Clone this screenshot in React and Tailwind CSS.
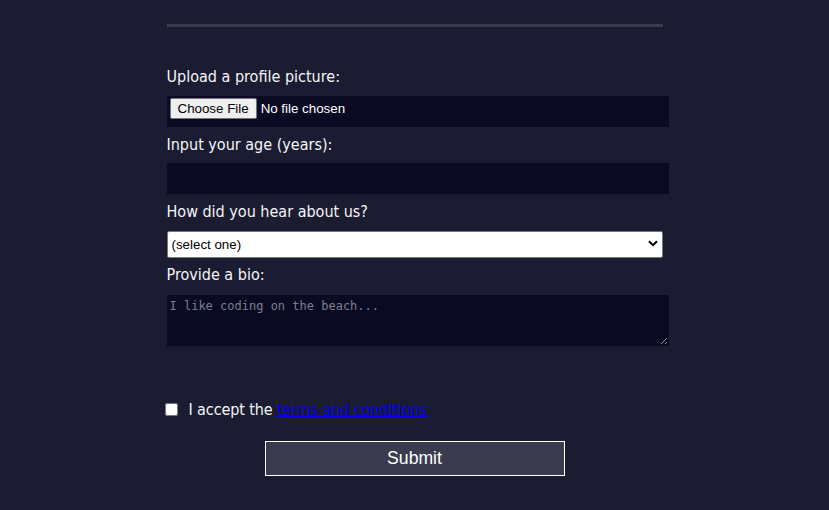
import React from 'react';

const labelFont = { fontFamily: '"DejaVu Sans Condensed", "DejaVu Sans", sans-serif' };

const App = () => {
    return (
        <div className="w-full h-[510px] bg-[#1b1b32] text-[#f5f6f7] overflow-hidden" style={labelFont}>
            <div className="mx-auto w-[496px] flex flex-col">
                {/* previous fieldset border */}
                <div className="mt-[24px] h-[3px] bg-[#3b3b4f]"></div>

                <label className="mt-[40px] h-[19px] leading-[19px] text-[16px]">Upload a profile picture:</label>
                <div className="mt-[10px] w-[502px] h-[31px] bg-[#0a0a23] flex items-start pt-[2px] pl-[3px] gap-[4px] font-['Liberation_Sans',sans-serif] text-[13.33px]">
                    <span className="h-[21px] px-[7px] flex items-center bg-[#efefef] border border-[#767676] rounded-[2px] text-black">Choose File</span>
                    <span className="h-[21px] flex items-center text-white">No file chosen</span>
                </div>

                <label className="mt-[8px] h-[19px] leading-[19px] text-[16px]">Input your age (years):</label>
                <input
                    type="number"
                    className="mt-[9px] w-[502px] h-[31px] bg-[#0a0a23] border border-[#0a0a23] text-white outline-none"
                />

                <label className="mt-[8px] h-[19px] leading-[19px] text-[16px]">How did you hear about us?</label>
                <div className="relative mt-[10px] w-full h-[27px]">
                    <select className="appearance-none w-full h-[27px] bg-white text-black border border-[#767676] rounded-[2px] pl-[4px] font-['Liberation_Sans',sans-serif] text-[13.33px] outline-none">
                        <option>(select one)</option>
                        <option>freeCodeCamp News</option>
                        <option>freeCodeCamp YouTube Channel</option>
                        <option>freeCodeCamp Forum</option>
                        <option>Other</option>
                    </select>
                    <svg className="absolute right-[5px] top-[9px] pointer-events-none" width="10" height="7" viewBox="0 0 10 7">
                        <path d="M1 1.2 L5 5.2 L9 1.2" fill="none" stroke="#000" strokeWidth="2" />
                    </svg>
                </div>

                <label className="mt-[7px] h-[19px] leading-[19px] text-[16px]">Provide a bio:</label>
                <textarea
                    placeholder="I like coding on the beach..."
                    className="mt-[11px] w-[502px] h-[51px] bg-[#0a0a23] border border-[#0a0a23] text-white px-[2px] pt-[3px] font-['DejaVu_Sans_Mono',monospace] text-[12px] leading-[15px] placeholder:text-[#7b7f8c] outline-none"
                ></textarea>

                <div className="mt-[54px] flex items-center h-[19px] text-[16px]">
                    <input type="checkbox" className="ml-[-2px] w-[13px] h-[13px] m-0" />
                    <span className="ml-[11px] tracking-[-0.1px]">
                        I accept the <a href="#" className="text-[#0000ee] underline">terms and conditions</a>
                    </span>
                </div>

                <div className="flex justify-center mt-[22px]">
                    <button className="w-[300px] h-[35px] bg-[#3b3b4f] border border-white text-white font-['Liberation_Sans',sans-serif] text-[17.6px]">
                        Submit
                    </button>
                </div>
            </div>
        </div>
    );
};

export default App;
